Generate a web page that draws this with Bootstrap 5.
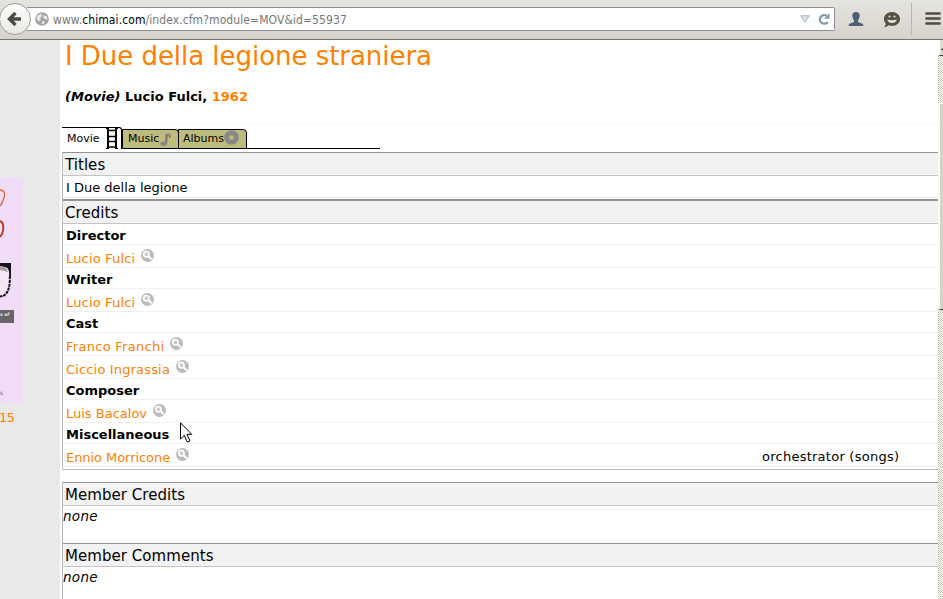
<!DOCTYPE html>
<html lang="en">
<head>
<meta charset="utf-8">
<meta name="viewport" content="width=device-width, initial-scale=1">
<title>I Due della legione straniera</title>
<link href="https://cdn.jsdelivr.net/npm/bootstrap@5.3.0/dist/css/bootstrap.min.css" rel="stylesheet">
<script src="https://cdn.jsdelivr.net/npm/bootstrap@5.3.0/dist/js/bootstrap.bundle.min.js" defer></script>
<style>
body{font:13px/20px "DejaVu Sans",Verdana,sans-serif;color:#000;height:599px;width:943px;background:#fff;overflow:hidden}
svg{display:block;flex:none}
a{color:#ff8000;text-decoration:none}
.toolbar{height:40px;background:linear-gradient(#e6e4df,#d6d3cb);border-bottom:1px solid #77746f}
.backbtn{width:32px;height:32px;margin:3px 0 0 -1px;border:1px solid #9c9c9a;border-radius:50%;background:linear-gradient(#fdfdfc,#e9e8e5);z-index:2}
.address{height:24px;width:808px;margin:7px 0 0 -4px;padding-left:8px;background:#fff;border:1px solid #8d8f92;border-left:0;border-radius:0 2px 2px 0}
.url{font:12px/22px "DejaVu Sans Condensed","DejaVu Sans",Tahoma,sans-serif;font-stretch:condensed;color:#777;letter-spacing:.09px;margin:1px 0 0 4px;white-space:pre}
.url b{font-weight:400;color:#000}
.person{margin:12px 0 0 13px}
.chat{margin:12px 0 0 19px}
.burger{margin:12px 0 0 12px}
.toolsep{width:1px;height:32px;background:#b4b6b8;margin:3px 0 0 10px}
.view{height:559px}
.side{width:60px;background:#e9e9e9;padding-top:138px}
.poster{width:23px;height:225px;background:#f1dcf8}
.side a{display:block;margin-top:5px;margin-left:-1px;letter-spacing:-.6px}
.main{width:878px;padding-left:2px}
h1{font-size:26px;line-height:32px;color:#ff8000;letter-spacing:-.04px;margin:0 0 0 3px;font-weight:400;white-space:nowrap}
.byline{font-weight:700;margin:14px 0 0 3px;line-height:21px;height:38px}
.byline{box-shadow:0 -1px #f8f8f8 inset}
.tabs{height:22px;width:318px;margin-top:3px;font-size:11px}
.tab-on{width:60px;height:22px;border-top:1px solid #000;border-right:1px solid #000;border-radius:0 3px 0 0;padding:0 3px 0 5px}
.tab-off{height:20px;line-height:22px;border:1px solid #000;border-radius:0 4px 0 0;background:#bebc7c;padding-left:5px}
.tab-music{width:57px}
.tab-albums{width:69px;margin-left:-1px;padding-left:4px}
.tabline{height:1px;background:#000}
.box{border-left:1px solid #bbb}
.titles{margin-top:3px;height:47px}
.credits{height:271px;border-bottom:1px solid #bbb}
.head{height:24px;font-size:15px;line-height:25px;background:#f2f2f2;border-top:1px solid #929292;border-bottom:1px solid #c4c4c4;padding-left:2px;letter-spacing:.05px}
.credits .head{height:25px;border-top-width:2px}
.line{border-bottom:1px solid #f0f0f0;margin-left:1px;padding-left:2px;height:23px}
.line.film{height:22px;line-height:24px}
.role{height:21px;font-weight:700;line-height:24px}
.line svg{margin:0 0 1px 6px}
.line a{padding-top:5px}
.ls-a{letter-spacing:.16px}
.ls-b{letter-spacing:.28px}
.ls-c{letter-spacing:-.06px}
.note{width:176px;letter-spacing:.25px;padding-top:3px}
.none{height:37px;font-style:italic;font-size:13.5px;line-height:21px;letter-spacing:.3px}
.scroll{width:5px;background:repeating-conic-gradient(#fff 0 25%,#cbc8bd 0 50%) 0 0/2px 2px}
.upbtn{height:16px;background:#dedbd3;border-left:2px solid #fff;border-bottom:1px solid #444}
.upbtn svg{margin-left:1px}
.thumb{height:207px;margin-top:47px;background:#d6d3cb;border-left:2px solid #fafafa;border-top:1px solid #fff;border-bottom:1px solid #444}
.pointer{position:absolute;left:180px;top:422px}
</style>
</head>
<body>
<svg width="0" height="0" class="position-absolute"><defs>
<g id="lens"><circle cx="6.5" cy="6.5" r="6.5" fill="#bcbcbc"/><circle cx="5.4" cy="5.2" r="2.7" fill="#ccc" stroke="#fff" stroke-width="1.5"/><path d="M7.5 7.3L10.8 10.4" stroke="#fff" stroke-width="1.9"/></g>
</defs></svg>
<header class="toolbar d-flex">
  <div class="backbtn d-flex align-items-center justify-content-center"><svg width="18" height="18" viewBox="0 0 18 18"><path d="M9.5 3L3.5 9L9.5 15M4 9H15" fill="none" stroke="#4c4943" stroke-width="3.4"/></svg></div>
  <div class="address d-flex align-items-center">
    <svg width="14" height="14" viewBox="0 0 14 14"><circle cx="7" cy="7" r="6.8" fill="#a3a3a3"/><path d="M2 4L6 1.5L7 4L5 6L6 8L4 9.500L1.500 7ZM8 3L12 4.500L12.500 8L10 7L8.500 6ZM7.500 9L10 9.500L8.500 12.500L6.500 11.500Z" fill="#e8e8e8"/></svg>
    <span class="url">www.<b>chimai.com</b>/index.cfm?module=MOV&amp;id=55937</span>
    <svg class="ms-auto" width="10" height="8" viewBox="0 0 10 8"><path d="M.8 .8H9.200L5 7.200Z" fill="#dce3ea" stroke="#a9b5c2"/></svg>
    <svg class="ms-2 me-1" width="12" height="14" viewBox="0 0 12 14"><path d="M9.700 10A4.300 4.300 0 1 1 8.600 3.800" fill="none" stroke="#8298ae" stroke-width="2.300"/><path d="M11.500 1V6.800H6Z" fill="#8298ae"/></svg>
  </div>
  <svg class="person" width="16" height="16" viewBox="0 0 16 16"><path d="M8 0C10.800 0 11.900 1.700 11.700 4C11.500 6.500 10.500 7.500 10 8.500V10C11 11 15.500 10.800 15.500 14H.5C.5 10.800 5 11 6 10V8.500C5.500 7.500 4.500 6.500 4.300 4C4.100 1.700 5.200 0 8 0Z" fill="#4e6078"/></svg>
  <svg class="chat" width="18" height="17" viewBox="0 0 18 17"><path d="M9 0C13.500 0 17 2.900 17 6.900S13.500 13.800 9 13.800C7.800 13.800 6.700 13.600 5.700 13.200C4.500 14.500 2.800 15.200 1 15.200C2.200 14 2.700 12.800 2.700 11.500C1.600 10.200 1 8.600 1 6.900C1 2.900 4.500 0 9 0Z" fill="#55503f"/><path d="M4 7.500Q9 9 14 7.500Q12.500 11 9 11T4 7.500Z" fill="#e6e4df"/><circle cx="6.500" cy="4.500" r="1.100" fill="#e6e4df"/><circle cx="11.500" cy="4.500" r="1.100" fill="#e6e4df"/></svg>
  <div class="toolsep"></div>
  <svg class="burger" width="17" height="14" viewBox="0 0 17 14"><path d="M2.500 1.500H15.500M2.500 6.500H15.500M2.500 11.500H15.500" stroke="#504b43" stroke-width="2.700" stroke-linecap="round"/></svg>
</header>
<div class="view d-flex">
  <aside class="side">
    <div class="poster"><svg width="23" height="225" viewBox="0 0 23 225"><path d="M0 12C4 12 6 15 3.500 21Q2 26 0 28" fill="none" stroke="#d8683c" stroke-width="1.300"/><path d="M0 43C4 44 4 51 2 56L0 59" fill="none" stroke="#b8401c" stroke-width="2"/><path d="M0 85H11V99H0Z" fill="#17131a"/><path d="M0 90Q8 87 9 94Q11 117 0 118Z" fill="#f5e6f8"/><path d="M0 88Q6 87 8 94L0 92Z" fill="#aaa0a6"/><path d="M9.800 98Q10.500 118 0 118.500" fill="none" stroke="#17131a" stroke-width="2" stroke-dasharray="3 .8"/><path d="M0 132H14V145H0Z" fill="#686468"/><text x="0" y="138" font-size="4.500" font-style="italic" font-weight="700" fill="#eee">s of</text><text x="0" y="217" font-size="6" fill="#555">s</text></svg></div>
    <a href="#">15</a>
  </aside>
  <main class="main">
    <h1>I Due della legione straniera</h1>
    <div class="byline"><i>(Movie)</i> Lucio Fulci, <a href="#">1962</a></div>
    <nav class="tabs d-flex align-items-end">
      <div class="tab-on d-flex align-items-center justify-content-between">Movie<svg width="12" height="21" viewBox="0 0 12 21"><path d="M2 0V21M10 0V21" stroke="#000" stroke-width="2"/><path d="M0 .5H3M9 .5H12M0 20.500H3M9 20.500H12" stroke="#000"/><path d="M2 2.500H10M2 8.500H10M2 13.500H10M2 19H10" stroke="#000" stroke-width="1.600"/></svg></div>
      <div class="tab-off tab-music d-flex align-items-center">Music<svg width="13" height="15" viewBox="0 0 13 15"><ellipse cx="4.500" cy="11.800" rx="3.200" ry="2.200" fill="#888"/><path d="M6.500 12L7.500 1.500H11.500V5.500H10V3.800H9L8.300 12Z" fill="#888"/><path d="M7.200 2L6.700 10M10.700 3.500V6" stroke="#85576a" fill="none"/></svg></div>
      <div class="tab-off tab-albums d-flex align-items-center">Albums<svg class="mb-1" width="15" height="15" viewBox="0 0 15 15"><circle cx="7.500" cy="7.500" r="4.800" fill="none" stroke="#898989" stroke-width="5"/></svg></div>
      <div class="tabline flex-grow-1"></div>
    </nav>
    <section class="box titles">
      <div class="head">Titles</div>
      <div class="line film">I Due della legione</div>
    </section>
    <section class="box credits">
      <div class="head">Credits</div>
      <div class="line role">Director</div>
      <div class="line d-flex align-items-center"><a class="ls-a" href="#">Lucio Fulci</a><svg width="13" height="13"><use href="#lens"/></svg></div>
      <div class="line role">Writer</div>
      <div class="line d-flex align-items-center"><a class="ls-a" href="#">Lucio Fulci</a><svg width="13" height="13"><use href="#lens"/></svg></div>
      <div class="line role">Cast</div>
      <div class="line d-flex align-items-center"><a class="ls-b" href="#">Franco Franchi</a><svg width="13" height="13"><use href="#lens"/></svg></div>
      <div class="line d-flex align-items-center"><a class="ls-a" href="#">Ciccio Ingrassia</a><svg width="13" height="13"><use href="#lens"/></svg></div>
      <div class="line role">Composer</div>
      <div class="line d-flex align-items-center"><a href="#">Luis Bacalov</a><svg width="13" height="13"><use href="#lens"/></svg></div>
      <div class="line role">Miscellaneous</div>
      <div class="line d-flex align-items-center"><a class="ls-c" href="#">Ennio Morricone</a><svg width="13" height="13"><use href="#lens"/></svg><span class="note ms-auto">orchestrator (songs)</span></div>
    </section>
    <section class="box mt-2 pt-1 border-start-0"></section>
    <section class="box">
      <div class="head">Member Credits</div>
      <div class="none">none</div>
      <div class="head">Member Comments</div>
      <div class="none">none</div>
    </section>
  </main>
  <div class="scroll"><div class="upbtn"><svg width="2" height="12" viewBox="0 0 2 12"><path d="M0 10H2V8Z"/></svg></div><div class="thumb"></div></div>
</div>
<svg class="pointer" width="13" height="22" viewBox="0 0 13 22"><path d="M.5 .8V17L4.300 13.300L7.300 20.200L10 19L7 12.300H11.800Z" fill="#fff" stroke="#000"/></svg>
</body>
</html>
